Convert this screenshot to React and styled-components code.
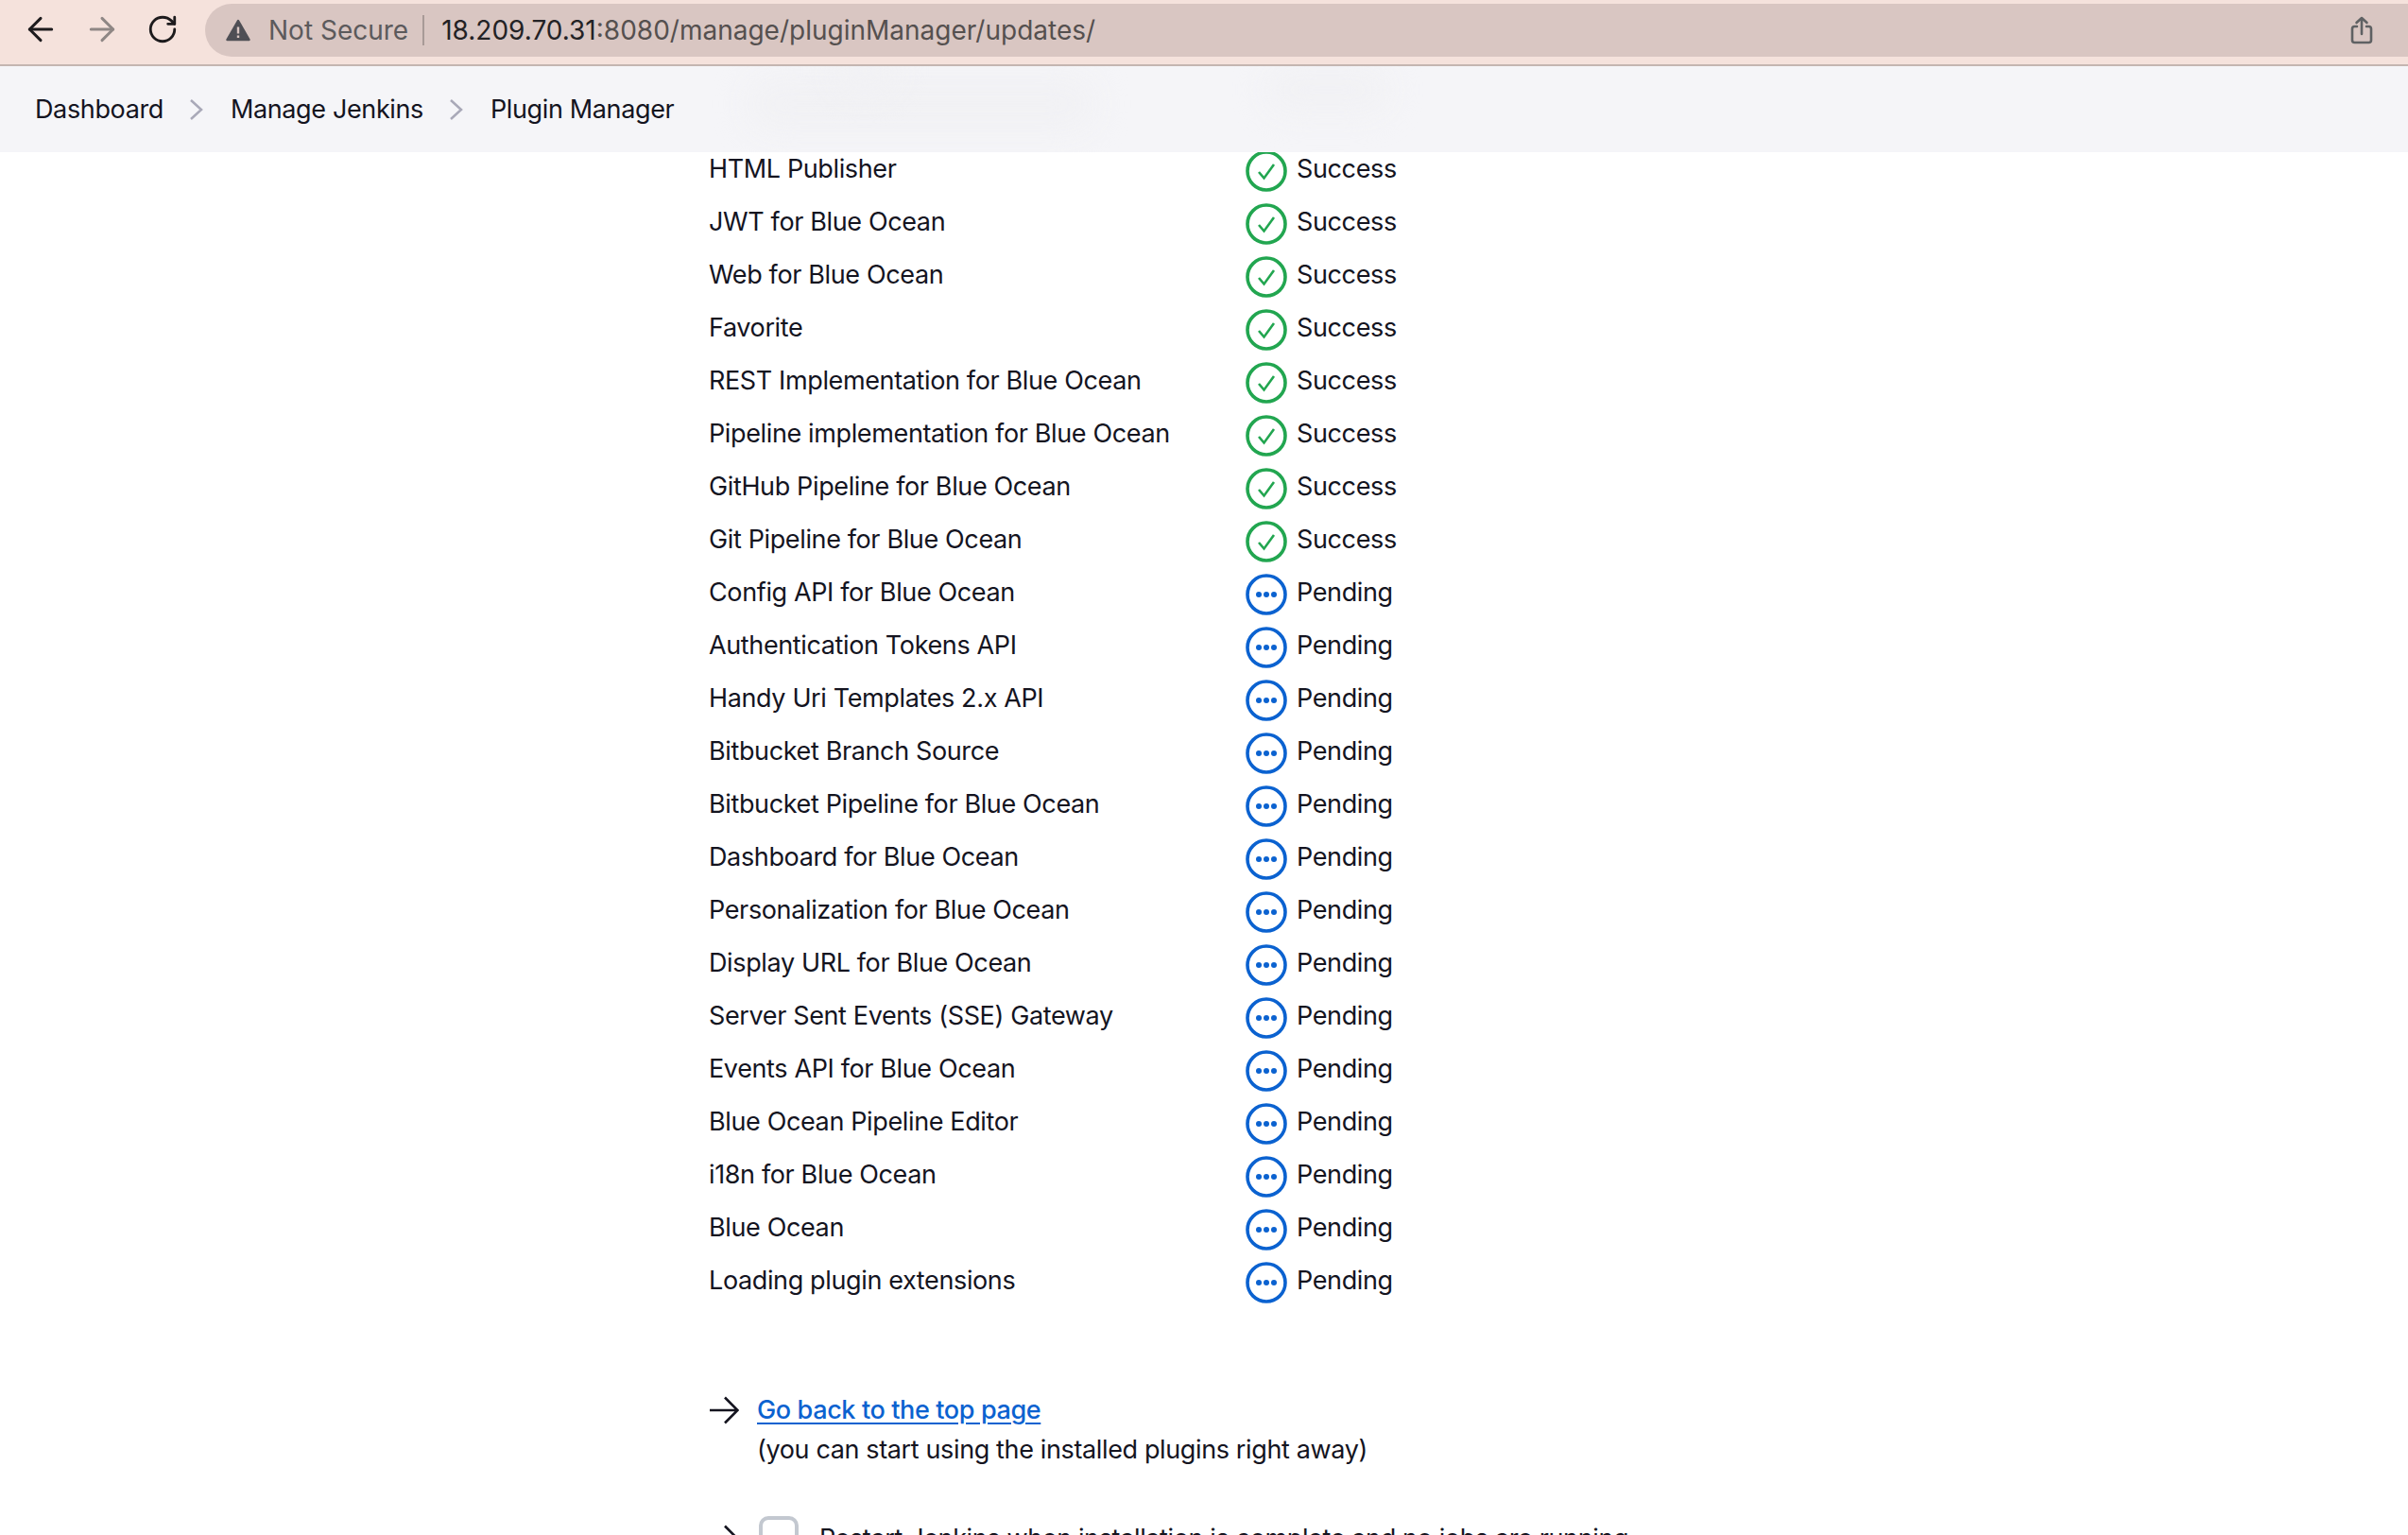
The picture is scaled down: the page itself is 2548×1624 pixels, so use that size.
import React from "react";
import styled, { createGlobalStyle } from "styled-components";
import { ArrowLeft, ArrowRight, RotateCw } from "lucide-react";

const GlobalStyle = createGlobalStyle`
  html, body {
    margin: 0;
    padding: 0;
    background: #fff;
  }
  body {
    font-family: Inter, "Liberation Sans", sans-serif;
    color: #14141f;
  }
`;

const Page = styled.div`
  width: 2548px;
  height: 1624px;
  overflow: hidden;
`;

const Browser = styled.div`
  height: 68px;
  box-sizing: content-box;
  background: #f5e2dc;
  border-bottom: 2px solid #c4b5b1;
  display: flex;
  align-items: flex-start;
  padding-left: 23px;
`;

const NavButton = styled.div`
  width: 40px;
  height: 40px;
  margin-top: 11px;
  margin-right: ${(p) => p.$gap}px;
  display: flex;
  align-items: center;
  justify-content: center;
  color: ${(p) => p.$color};
`;

const AddressBar = styled.div`
  flex: 1;
  height: 56px;
  margin-top: 4px;
  background: #d9c6c2;
  border-radius: 28px 0 0 28px;
  display: flex;
  align-items: center;
  padding-left: 22px;
  padding-right: 37px;
  font-size: 28px;
`;

const WarnIcon = styled.svg`
  width: 26px;
  height: 24px;
  flex: none;
`;

const NotSecure = styled.span`
  color: #5c5a5c;
  margin-left: 19px;
  padding-right: 15px;
  border-right: 2px solid #a89a97;
  line-height: 32px;
`;

const Url = styled.span`
  color: #232225;
  margin-left: 18px;
  flex: 1;
  span {
    color: #55504f;
  }
`;

const ShareIcon = styled.svg`
  width: 24px;
  height: 30px;
  fill: none;
  stroke: #5f6163;
  stroke-width: 2.6;
  stroke-linecap: round;
  stroke-linejoin: round;
`;

const Breadcrumbs = styled.nav`
  position: relative;
  z-index: 2;
  height: 91px;
  background: #f5f5f8;
  display: flex;
  align-items: center;
  padding-left: 37px;
  font-size: 27px;
  letter-spacing: -0.37px;
  overflow: hidden;
`;

const Crumb = styled.span`
  color: #14141f;
  position: relative;
`;

const Chevron = styled.svg`
  width: 18px;
  height: 30px;
  margin: 0 27px 0 26px;
  fill: none;
  stroke: #a9a9b8;
  stroke-width: 2.5;
  position: relative;
`;

const Smudge = styled.div`
  position: absolute;
  top: ${(p) => p.$top}px;
  left: ${(p) => p.$left}px;
  width: ${(p) => p.$width}px;
  height: ${(p) => p.$height}px;
  background: #f1f1f4;
  border-radius: 30px;
  filter: blur(16px);
`;

const Content = styled.main`
  margin-top: -10px;
  padding-left: 750px;
`;

const Rows = styled.div`
  display: flex;
  flex-direction: column;
`;

const Row = styled.div`
  display: grid;
  grid-template-columns: 568px 1fr;
  height: 56px;
  align-items: center;
  font-size: 27px;
  letter-spacing: -0.37px;
  line-height: 36px;
`;

const Status = styled.div`
  display: flex;
  align-items: center;
  gap: 10px;
`;

const StatusIcon = styled.svg`
  width: 44px;
  height: 44px;
  margin-top: 3px;
  fill: none;
  stroke: ${(p) => p.$color};
  stroke-width: 3.6;
`;

const Dot = styled.circle`
  fill: #0b62d0;
  stroke: none;
`;

const BackBlock = styled.div`
  margin-top: 88px;
  display: grid;
  grid-template-columns: 51px 1fr;
  font-size: 27px;
  letter-spacing: -0.37px;
  line-height: 42px;
`;

const ArrowCell = styled.div`
  height: 42px;
  display: flex;
  align-items: center;
`;

const LongArrow = styled.svg`
  width: 32px;
  height: 30px;
  fill: none;
  stroke: #14141f;
  stroke-width: 2.6;
`;

const BackLink = styled.a`
  color: #0b62d0;
  font-weight: 500;
  text-decoration: underline;
  text-underline-offset: 4px;
`;

const Hint = styled.div`
  grid-column: 2;
`;

const RestartRow = styled.div`
  margin-top: 52px;
  display: grid;
  grid-template-columns: 53px 64px 1fr;
  font-size: 27px;
  letter-spacing: -0.37px;
  line-height: 42px;
`;

const Checkbox = styled.div`
  width: 42px;
  height: 42px;
  margin-top: -3px;
  border: 4px solid #c3c8d0;
  border-radius: 10px;
  box-sizing: border-box;
`;

const plugins = [
  ["HTML Publisher", "ok"],
  ["JWT for Blue Ocean", "ok"],
  ["Web for Blue Ocean", "ok"],
  ["Favorite", "ok"],
  ["REST Implementation for Blue Ocean", "ok"],
  ["Pipeline implementation for Blue Ocean", "ok"],
  ["GitHub Pipeline for Blue Ocean", "ok"],
  ["Git Pipeline for Blue Ocean", "ok"],
  ["Config API for Blue Ocean", "pending"],
  ["Authentication Tokens API", "pending"],
  ["Handy Uri Templates 2.x API", "pending"],
  ["Bitbucket Branch Source", "pending"],
  ["Bitbucket Pipeline for Blue Ocean", "pending"],
  ["Dashboard for Blue Ocean", "pending"],
  ["Personalization for Blue Ocean", "pending"],
  ["Display URL for Blue Ocean", "pending"],
  ["Server Sent Events (SSE) Gateway", "pending"],
  ["Events API for Blue Ocean", "pending"],
  ["Blue Ocean Pipeline Editor", "pending"],
  ["i18n for Blue Ocean", "pending"],
  ["Blue Ocean", "pending"],
  ["Loading plugin extensions", "pending"],
];

function StatusCell({ state }) {
  if (state === "ok") {
    return (
      <Status>
        <StatusIcon viewBox="0 0 44 44" $color="#22a650">
          <circle cx="22" cy="22" r="20" />
          <path d="M14 23l5.5 6.5L30 15" strokeWidth="2.6" />
        </StatusIcon>
        Success
      </Status>
    );
  }
  return (
    <Status>
      <StatusIcon viewBox="0 0 44 44" $color="#0b62d0">
        <circle cx="22" cy="22" r="20" />
        <Dot cx="14" cy="22" r="3" />
        <Dot cx="22" cy="22" r="3" />
        <Dot cx="30" cy="22" r="3" />
      </StatusIcon>
      Pending
    </Status>
  );
}

function Separator() {
  return (
    <Chevron viewBox="0 0 18 30">
      <path d="M3 5l11 10L3 25" />
    </Chevron>
  );
}

function ForwardArrow() {
  return (
    <LongArrow viewBox="0 0 32 30">
      <path d="M1 15h29M17 1.5L30.5 15 17 28.5" />
    </LongArrow>
  );
}

export default function App() {
  return (
    <Page>
      <GlobalStyle />
      <Browser>
        <NavButton $gap={25} $color="#1d1b1d">
          <ArrowLeft size={40} strokeWidth={1.8} />
        </NavButton>
        <NavButton $gap={24} $color="#8f8785">
          <ArrowRight size={40} strokeWidth={1.8} />
        </NavButton>
        <NavButton $gap={25} $color="#1d1b1d">
          <RotateCw size={34} strokeWidth={2} />
        </NavButton>
        <AddressBar>
          <WarnIcon viewBox="0 0 26 24">
            <path
              d="M13 2L24.5 22H1.5Z"
              fill="#4f4f55"
              stroke="#4f4f55"
              strokeWidth="2.5"
              strokeLinejoin="round"
            />
            <path d="M13 8.5v7M13 17.5v2.5" stroke="#d9c6c2" strokeWidth="2.4" />
          </WarnIcon>
          <NotSecure>Not Secure</NotSecure>
          <Url>
            18.209.70.31<span>:8080/manage/pluginManager/updates/</span>
          </Url>
          <ShareIcon viewBox="0 0 24 30">
            <path d="M7 11H4.5A2.5 2.5 0 0 0 2 13.5v12A2.5 2.5 0 0 0 4.5 28h15a2.5 2.5 0 0 0 2.5-2.5v-12A2.5 2.5 0 0 0 19.500 11H17" />
            <path d="M12 19V2M6.500 7L12 2l5.500 5" />
          </ShareIcon>
        </AddressBar>
      </Browser>
      <Breadcrumbs>
        <Smudge $top={10} $left={790} $width={370} $height={60} />
        <Smudge $top={-20} $left={880} $width={70} $height={50} />
        <Smudge $top={0} $left={1340} $width={130} $height={50} />
        <Crumb>Dashboard</Crumb>
        <Separator />
        <Crumb>Manage Jenkins</Crumb>
        <Separator />
        <Crumb>Plugin Manager</Crumb>
      </Breadcrumbs>
      <Content>
        <Rows>
          {plugins.map(([name, state]) => (
            <Row key={name}>
              <span>{name}</span>
              <StatusCell state={state} />
            </Row>
          ))}
        </Rows>
        <BackBlock>
          <ArrowCell>
            <ForwardArrow />
          </ArrowCell>
          <BackLink href="#">Go back to the top page</BackLink>
          <Hint>(you can start using the installed plugins right away)</Hint>
        </BackBlock>
        <RestartRow>
          <ArrowCell>
            <ForwardArrow />
          </ArrowCell>
          <Checkbox />
          <span>Restart Jenkins when installation is complete and no jobs are running</span>
        </RestartRow>
      </Content>
    </Page>
  );
}
